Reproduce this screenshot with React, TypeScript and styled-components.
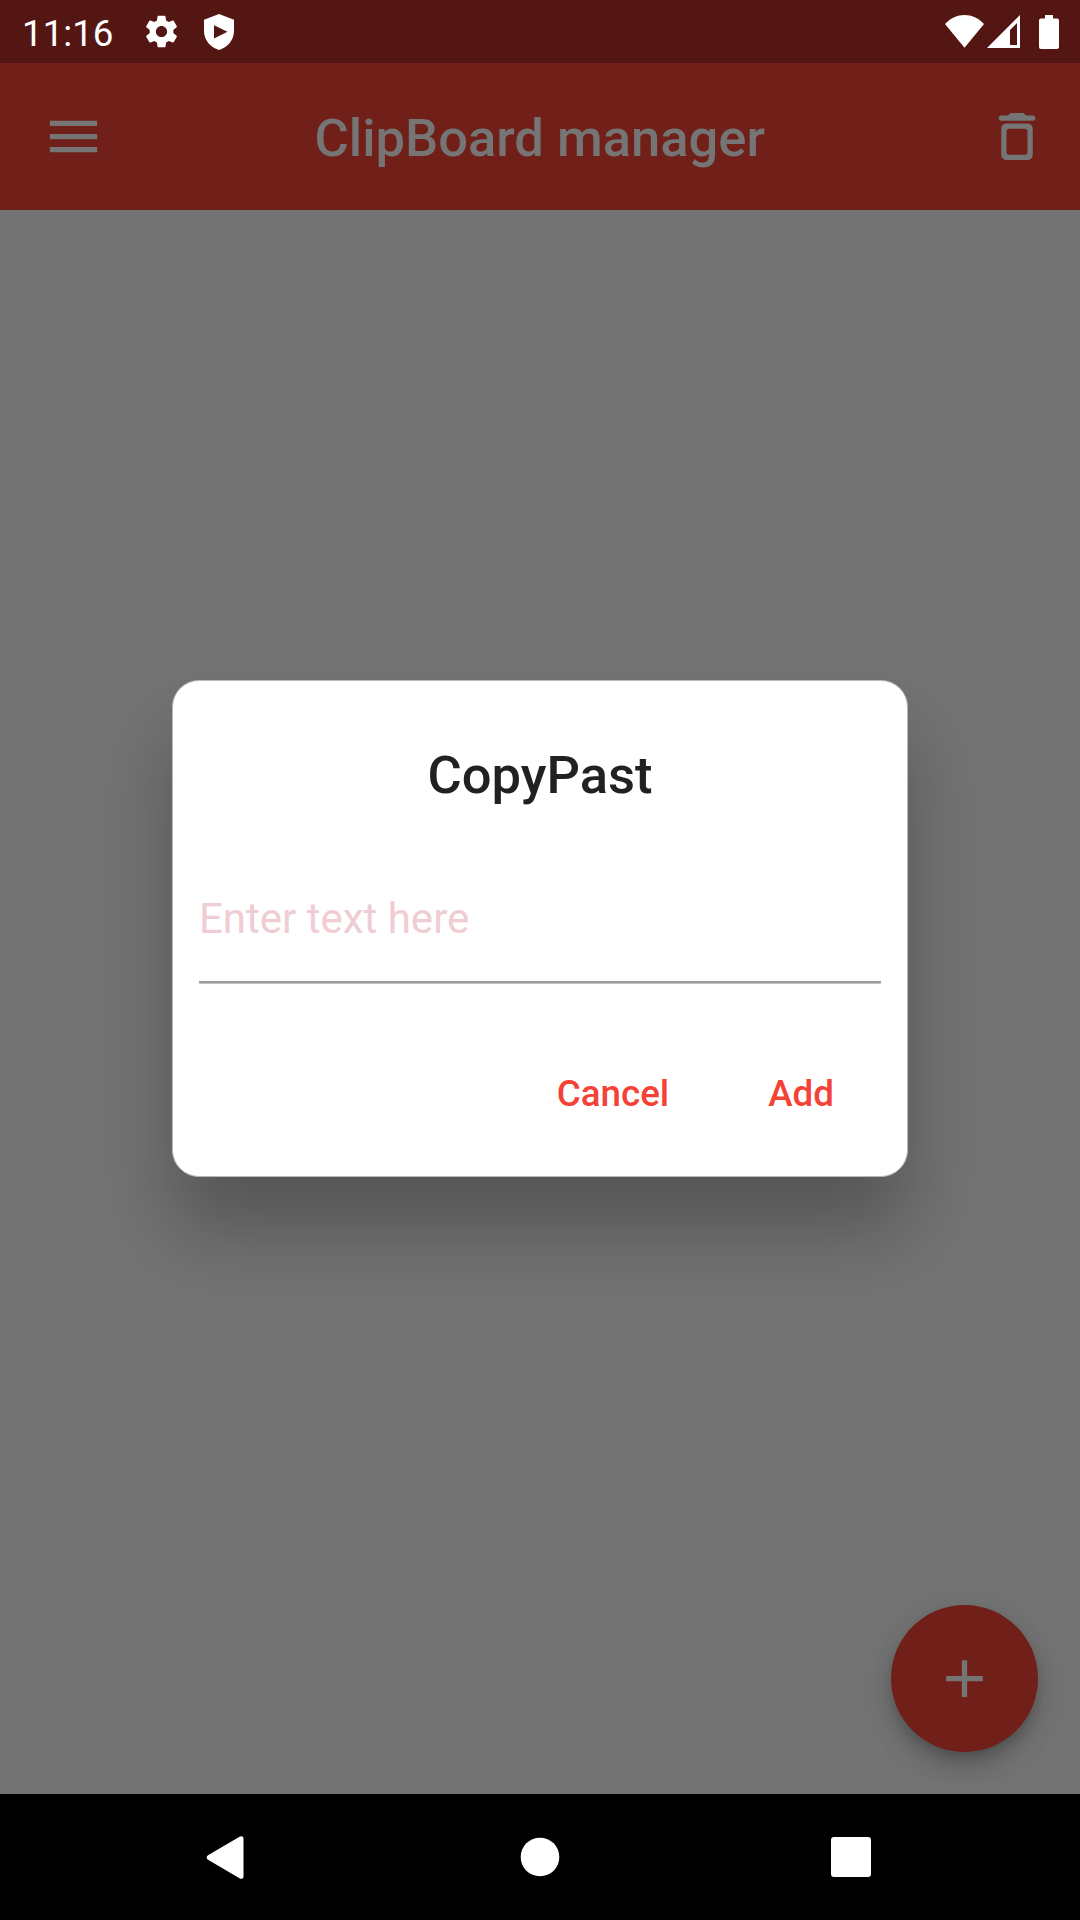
import React from "react";
import styled, { createGlobalStyle } from "styled-components";

const Global = createGlobalStyle`
  *, *::before, *::after { box-sizing: border-box; }
  body { margin: 0; background: #000; font-family: Roboto, "Noto Sans", sans-serif; }
  button { border: 0; background: none; padding: 0; margin: 0; font: inherit; color: inherit; cursor: pointer; }
`;

const Screen = styled.div`
  position: relative;
  width: 1080px;
  height: 1920px;
  display: flex;
  flex-direction: column;
  overflow: hidden;
`;

const StatusBar = styled.header`
  height: 63px;
  flex: none;
  background: #541613;
  color: #fff;
  display: flex;
  align-items: center;
  justify-content: space-between;
  padding: 0 21px 0 22px;
`;

const StatusGroup = styled.div`
  display: flex;
  align-items: center;
`;

const Clock = styled.time`
  font-size: 36.75px;
  line-height: 44px;
  width: 123px;
  padding-top: 4px;
`;

const Icon = styled.svg<{ $w: number; $h?: number; $before?: number }>`
  display: block;
  flex: none;
  width: ${(p) => p.$w}px;
  height: ${(p) => p.$h ?? p.$w}px;
  margin-left: ${(p) => p.$before ?? 0}px;
  fill: currentColor;
`;

const AppBar = styled.nav`
  height: 147px;
  flex: none;
  background: #701f19;
  color: #757575;
  display: grid;
  grid-template-columns: 147px 1fr 126px;
  align-items: center;
`;

const BarButton = styled.button`
  height: 100%;
  display: flex;
  align-items: center;
  justify-content: center;
`;

const BarTitle = styled.h1`
  margin: 0;
  padding: 2px 21.5px 0 0;
  text-align: center;
  font-size: 52.5px;
  line-height: 62px;
  font-weight: 500;
  white-space: nowrap;
`;

const Body = styled.main`
  flex: 1;
  background: #737373;
  display: flex;
  align-items: flex-end;
  justify-content: flex-end;
  padding: 42px;
`;

const Fab = styled.button`
  && {
    width: 147px;
    height: 147px;
    border-radius: 50%;
    background: #701f19;
    color: #757575;
    display: flex;
    align-items: center;
    justify-content: center;
    box-shadow: 0 8px 13px -3px rgba(0, 0, 0, 0.2), 0 16px 26px rgba(0, 0, 0, 0.14), 0 3px 47px rgba(0, 0, 0, 0.06);
  }
`;

const Overlay = styled.div`
  position: absolute;
  top: 63px;
  left: 0;
  right: 0;
  bottom: 126px;
  display: flex;
  align-items: center;
  justify-content: center;
`;

const Dialog = styled.section`
  width: 736px;
  height: 497px;
  border: 1px solid #b9b9b9;
  border-radius: 27px;
  background: #fff;
  padding: 63px 26px 0;
  display: flex;
  flex-direction: column;
  box-shadow: 0 54px 76px rgba(0, 0, 0, 0.25);
`;

const DialogTitle = styled.h2`
  margin: 0;
  text-align: center;
  font-size: 52.5px;
  line-height: 62px;
  font-weight: 500;
  color: #212121;
`;

const Field = styled.input`
  margin-top: 52px;
  height: 125px;
  border: 0;
  border-bottom: 2px solid #9b9b9b;
  box-shadow: 0 1px 0 #c4c4c4;
  border-radius: 0;
  outline: 0;
  padding: 0 0 2px;
  background: none;
  font: 400 42px/49px Roboto, sans-serif;
  color: #212121;
  &::placeholder { color: #efcdd2; opacity: 1; }
`;

const Actions = styled.div`
  display: flex;
  justify-content: flex-end;
  gap: 15px;
  margin-top: 47px;
  padding-right: 5px;
`;

const TextButton = styled.button`
  && {
    height: 126px;
    padding: 0 42px;
    font-size: 36.75px;
    font-weight: 500;
    color: #f44336;
  }
`;

const NavBar = styled.footer`
  height: 126px;
  flex: none;
  background: #000;
  color: #fff;
  display: grid;
  grid-template-columns: 311px 311px 311px;
  justify-content: center;
`;

const NavButton = styled.button<{ $shift?: number }>`
  && {
    display: flex;
    align-items: center;
    justify-content: center;
    padding-right: ${(p) => p.$shift ?? 0}px;
  }
`;

export default function App() {
  return (
    <Screen>
      <Global />
      <StatusBar>
        <StatusGroup>
          <Clock>11:16</Clock>
          <Icon $w={33} viewBox="2 2 20 20">
            <path d="M19.14 12.94c.04-.3.06-.61.06-.94 0-.32-.02-.64-.07-.94l2.03-1.58c.18-.14.23-.41.12-.61l-1.92-3.32c-.12-.22-.37-.29-.59-.22l-2.39.96c-.5-.38-1.03-.7-1.62-.94l-.36-2.54c-.04-.24-.24-.41-.48-.41h-3.84c-.24 0-.43.17-.47.41l-.36 2.54c-.59.24-1.13.57-1.62.94l-2.39-.96c-.22-.08-.47 0-.59.22L2.74 8.87c-.12.21-.08.47.12.61l2.03 1.58c-.05.3-.07.62-.07.94s.02.64.07.94l-2.03 1.58c-.18.14-.23.41-.12.61l1.92 3.32c.12.22.37.29.59.22l2.39-.96c.5.38 1.03.7 1.62.94l.36 2.54c.05.24.24.41.48.41h3.84c.24 0 .44-.17.47-.41l.36-2.54c.59-.24 1.13-.56 1.62-.94l2.39.96c.22.08.47 0 .59-.22l1.92-3.32c.12-.22.07-.47-.12-.61l-2.01-1.58zM12 15.4c-1.88 0-3.4-1.52-3.4-3.4s1.52-3.4 3.4-3.4 3.4 1.52 3.4 3.4-1.52 3.4-3.4 3.4z" />
          </Icon>
          <Icon $w={30} $h={36} $before={26} viewBox="0 0 30 36">
            <path fillRule="evenodd" d="M15 0 30 5.7V17C30 26 23.5 33.6 15 36 6.500 33.600 0 26 0 17V5.700ZM10 11.200V24.500L23.500 17.800Z" />
          </Icon>
        </StatusGroup>
        <StatusGroup>
          <Icon $w={39} $h={33} viewBox="0 0 39 33">
            <path d="M0 9C11-3 28-3 39 9L19.500 32.800Z" />
          </Icon>
          <Icon $w={33} $h={33} $before={3} viewBox="0 0 33 33">
            <path fillRule="evenodd" d="M33 0V33H0ZM30 8 23 15V30H30Z" />
          </Icon>
          <Icon $w={20} $h={34} $before={19} viewBox="0 0 20 34">
            <path d="M6 0h8v3.500h4a2 2 0 0 1 2 2V32a2 2 0 0 1-2 2H2a2 2 0 0 1-2-2V5.500a2 2 0 0 1 2-2h4Z" />
          </Icon>
        </StatusGroup>
      </StatusBar>
      <AppBar>
        <BarButton aria-label="Menu">
          <Icon $w={63} viewBox="0 0 24 24">
            <path d="M3 18h18v-2H3v2zm0-5h18v-2H3v2zm0-7v2h18V6H3z" />
          </Icon>
        </BarButton>
        <BarTitle>ClipBoard manager</BarTitle>
        <BarButton aria-label="Delete">
          <Icon $w={64} $h={63} viewBox="-0.19 0 24.381 24">
            <path fillRule="evenodd" d="M6 19c0 1.100.9 2 2 2h8c1.100 0 2-.9 2-2V9c0-1.100-.9-2-2-2H8c-1.100 0-2 .9-2 2v10zM9 9h6c.55 0 1 .45 1 1v8c0 .55-.45 1-1 1H9c-.55 0-1-.45-1-1v-8c0-.55.45-1 1-1zm6.500-5l-.71-.71c-.18-.18-.44-.29-.7-.29H9.910c-.26 0-.52.11-.7.29L8.500 4H6c-.55 0-1 .45-1 1s.45 1 1 1h12c.55 0 1-.45 1-1s-.45-1-1-1h-2.500z" />
          </Icon>
        </BarButton>
      </AppBar>
      <Body>
        <Fab aria-label="Add">
          <Icon $w={63} viewBox="0 0 24 24">
            <path d="M19 13h-6v6h-2v-6H5v-2h6V5h2v6h6v2z" />
          </Icon>
        </Fab>
      </Body>
      <NavBar>
        <NavButton aria-label="Back" $shift={8}>
          <Icon $w={38} $h={43} viewBox="0 0 38 43">
            <path d="M33.500.8C35.500-.4 37.500.3 37.500 2.500V40.500C37.500 42.700 35.500 43.400 33.500 42.200L2 23.700C.2 22.500.2 20.500 2 19.300Z" />
          </Icon>
        </NavButton>
        <NavButton aria-label="Home">
          <Icon $w={40} viewBox="0 0 40 40">
            <circle cx="20" cy="20" r="19.300" />
          </Icon>
        </NavButton>
        <NavButton aria-label="Overview">
          <Icon $w={40} viewBox="0 0 40 40">
            <rect width="40" height="40" rx="3" />
          </Icon>
        </NavButton>
      </NavBar>
      <Overlay>
        <Dialog role="dialog">
          <DialogTitle>CopyPast</DialogTitle>
          <Field placeholder="Enter text here" />
          <Actions>
            <TextButton>Cancel</TextButton>
            <TextButton>Add</TextButton>
          </Actions>
        </Dialog>
      </Overlay>
    </Screen>
  );
}
